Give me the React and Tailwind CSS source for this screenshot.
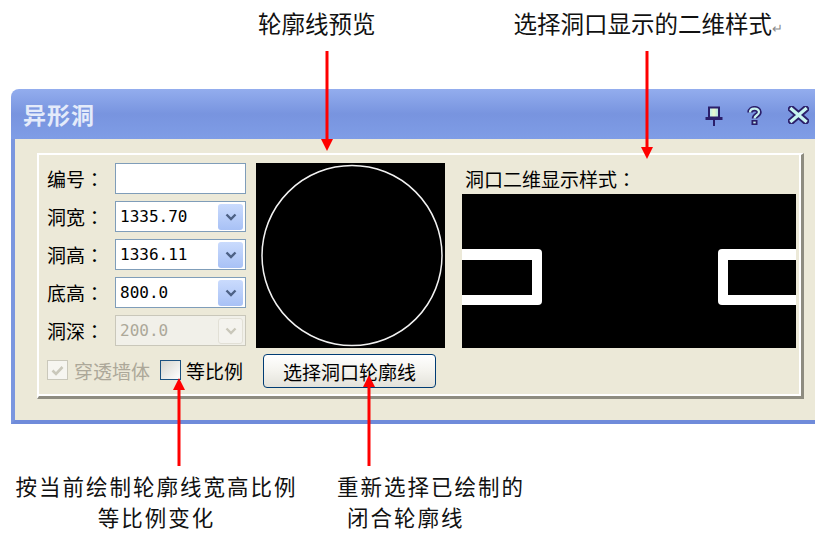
import React from 'react';

const cjk = "font-['Noto_Sans_CJK_SC','Noto_Sans',sans-serif]";

function Combo({ value, disabled }) {
  return (
    <div
      className={`flex h-[31px] w-[131px] items-center border ${
        disabled ? 'border-[#C9C7BA] bg-[#F1F0E9]' : 'border-[#7F9DB9] bg-white'
      }`}
    >
      <span
        className={`flex-1 pl-[4px] font-['DejaVu_Sans_Mono',monospace] text-[16px] leading-none ${
          disabled ? 'text-[#ACA899]' : 'text-black'
        }`}
      >
        {value}
      </span>
      <div
        className={`mr-[2px] flex h-[26px] w-[25px] items-center justify-center rounded-[3px] ${
          disabled ? 'border border-[#E2E0D6] bg-[#F4F3EE]' : 'bg-linear-to-b from-[#CADBFD] to-[#A8C1F5]'
        }`}
      >
        <svg width="12" height="8" viewBox="0 0 12 8">
          <path
            d="M1.5 1.5 L6 6 L10.5 1.5"
            fill="none"
            stroke={disabled ? '#C9C7BA' : '#4D6185'}
            strokeWidth="2.4"
          />
        </svg>
      </div>
    </div>
  );
}

function Label({ text }) {
  return (
    <span className="flex w-[68px] text-[19px] leading-none text-black">
      {text}
      <span className="font-['Noto_Sans_CJK_JP',sans-serif]">：</span>
    </span>
  );
}

function Row({ label, value, disabled, plain }) {
  return (
    <div className="flex h-[31px] items-center">
      <Label text={label} />
      {plain ? (
        <div className="h-[31px] w-[131px] border border-[#7F9DB9] bg-white" />
      ) : (
        <Combo value={value} disabled={disabled} />
      )}
    </div>
  );
}

export default function App() {
  return (
    <div className={`relative h-[533px] w-[815px] overflow-hidden bg-white ${cjk}`}>
      {/* top notes */}
      <div className="flex h-[89px] items-start pl-[258px] pt-[7px] text-[23.5px] leading-[32px] text-[#111]">
        <span>轮廓线预览</span>
        <span className="ml-[138px]">
          选择洞口显示的二维样式<span className="text-[13px] text-[#8a8a8a]">↵</span>
        </span>
      </div>

      {/* window */}
      <div className="ml-[11px] w-[820px]">
        <div className="flex h-[50px] items-center rounded-tl-[8px] bg-linear-to-b from-[#93ADEE] via-[#7894DF] to-[#7F9DE6] pl-[12px] pr-[22px]">
          <span className="text-[23px] font-bold tracking-[1px] text-[#E4EBFA]">异形洞</span>
          <div className="flex-1" />
          <svg width="18" height="20" viewBox="0 0 18 20" className="mt-[3px]">
            <defs>
              <linearGradient id="pin" x1="0" x2="1" y1="0" y2="0">
                <stop offset="0" stopColor="#B6ECF2" />
                <stop offset="0.5" stopColor="#EAF8CC" />
                <stop offset="1" stopColor="#A4DEE8" />
              </linearGradient>
            </defs>
            <rect x="4" y="1.5" width="10" height="10" fill="url(#pin)" stroke="#2B1F6A" strokeWidth="2" />
            <rect x="0.5" y="11" width="17" height="3" fill="#2B1F6A" />
            <rect x="8" y="14" width="2" height="6" fill="#2B1F6A" />
          </svg>
          <svg width="17" height="19" viewBox="0 0 17 19" className="ml-[23px] mt-[3px]">
            <path d="M4 6.5 C4 1.5 13 1.5 13 6 C13 9.5 8.5 9 8.5 12.5" fill="none" stroke="#2B1F6A" strokeWidth="5.5" />
            <path d="M4 6.5 C4 1.5 13 1.5 13 6 C13 9.5 8.5 9 8.5 12.5" fill="none" stroke="#C8F2EE" strokeWidth="2.2" />
            <rect x="5.5" y="14" width="6" height="5" fill="#2B1F6A" />
            <rect x="7.3" y="15.6" width="2.4" height="1.8" fill="#C8F2EE" />
          </svg>
          <svg width="21" height="18" viewBox="0 0 21 18" className="ml-[25px] mt-[2px]">
            <path d="M3.5 3 L17.5 15 M17.5 3 L3.5 15" stroke="#2B1F6A" strokeWidth="7" strokeLinecap="square" />
            <path d="M3.5 3 L17.5 15 M17.5 3 L3.5 15" stroke="#C8F4F0" strokeWidth="3.2" strokeLinecap="square" />
          </svg>
        </div>

        <div className="border-b-4 border-l-4 border-b-[#6F8BDA] border-l-[#7A96DF] bg-[#ECE9D8] pb-[21px] pl-[22px] pt-[14px]">
          <div className="h-[246px] w-[767px] border-b-[3px] border-l-2 border-r-[3px] border-t-2 border-b-[#8E8C80] border-l-white border-r-[#8E8C80] border-t-white">
            <div className="flex h-full border-b-2 border-r-2 border-b-white border-r-white pl-[8px] pt-[8px]">
              {/* left column */}
              <div className="flex w-[209px] flex-col">
                <div className="flex flex-col gap-[7px]">
                  <Row label="编号" plain />
                  <Row label="洞宽" value="1335.70" />
                  <Row label="洞高" value="1336.11" />
                  <Row label="底高" value="800.0" />
                  <Row label="洞深" value="200.0" disabled />
                </div>
                <div className="mt-[14px] flex items-center text-[19px] leading-none">
                  <div className="flex h-[20px] w-[21px] items-center justify-center border border-[#CAC8BB] bg-[#F6F5F0]">
                    <svg width="13" height="11" viewBox="0 0 13 11">
                      <path d="M1.5 5.5 L5 9 L11.5 2" fill="none" stroke="#CAC8BB" strokeWidth="2.6" />
                    </svg>
                  </div>
                  <span className="ml-[6px] text-[#ACA899]">穿透墙体</span>
                  <div className="ml-[10px] h-[20px] w-[21px] border border-[#1C5180] bg-linear-to-br from-[#D6D5CE] to-white" />
                  <span className="ml-[5px] text-black">等比例</span>
                </div>
              </div>

              {/* preview */}
              <div className="flex w-[189px] flex-col">
                <svg width="189" height="185" viewBox="0 0 189 185" className="bg-black">
                  <circle cx="96" cy="92.5" r="90" fill="none" stroke="#F2F2F2" strokeWidth="1.5" />
                </svg>
                <button className="ml-[7px] mt-[6px] flex h-[34px] w-[173px] items-center justify-center rounded-[4px] border border-[#003C74] bg-linear-to-b from-white via-[#F4F3EE] to-[#E3E2DA] text-[19px] leading-none text-black">
                  选择洞口轮廓线
                </button>
              </div>

              {/* 2D style */}
              <div className="ml-[17px] flex w-[334px] flex-col">
                <div className="flex h-[31px] items-center pl-[3px] text-[19px] leading-none text-black">
                  洞口二维显示样式<span className="font-['Noto_Sans_CJK_JP',sans-serif]">：</span>
                </div>
                <svg width="334" height="154" viewBox="0 0 334 154" className="bg-black">
                  <rect x="-10" y="55" width="90" height="56" rx="4" fill="white" />
                  <rect x="-10" y="66" width="80" height="35" fill="black" />
                  <rect x="256" y="55" width="90" height="56" rx="4" fill="white" />
                  <rect x="266" y="66" width="80" height="35" fill="black" />
                </svg>
              </div>
            </div>
          </div>
        </div>
      </div>

      {/* bottom notes */}
      <div className="flex pt-[46px] text-[21.5px] leading-[31px] tracking-[2px] text-[#111]">
        <div className="ml-[13px] flex w-[287px] flex-col items-center">
          <div className="whitespace-nowrap">按当前绘制轮廓线宽高比例</div>
          <div>等比例变化</div>
        </div>
        <div className="ml-[37px] flex flex-col">
          <div className="whitespace-nowrap">重新选择已绘制的</div>
          <div className="pl-[10px]">闭合轮廓线</div>
        </div>
      </div>

      {/* red pointers */}
      <svg className="pointer-events-none absolute left-0 top-0" width="815" height="533" viewBox="0 0 815 533">
        <g fill="#FF0000" stroke="#FF0000">
          <line x1="327" y1="51" x2="327" y2="141" strokeWidth="3" />
          <polygon points="321,139 333,139 327,151" stroke="none" />
          <line x1="647" y1="51" x2="647" y2="149" strokeWidth="3" />
          <polygon points="641,147 653,147 647,159" stroke="none" />
          <line x1="179" y1="388" x2="179" y2="466" strokeWidth="3" />
          <polygon points="173,390 185,390 179,378" stroke="none" />
          <line x1="369" y1="385" x2="369" y2="466" strokeWidth="3" />
          <polygon points="363,387 375,387 369,375" stroke="none" />
        </g>
      </svg>
    </div>
  );
}
